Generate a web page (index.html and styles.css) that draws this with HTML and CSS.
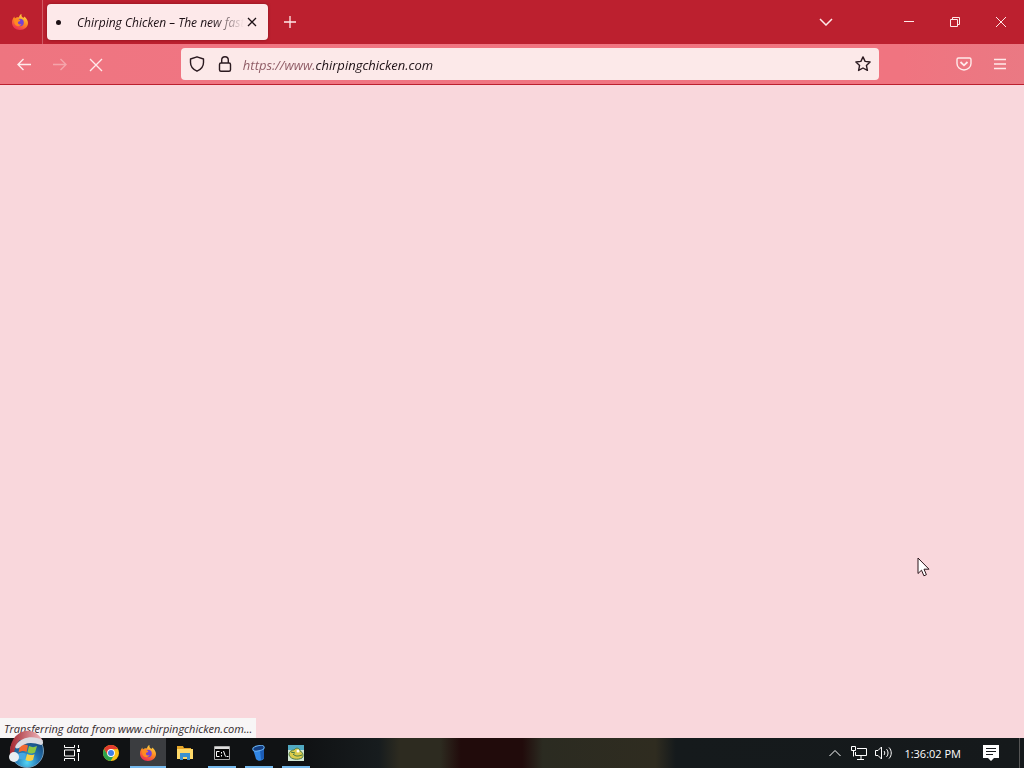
FILE: index.html
```html
<!DOCTYPE html>
<html lang="en">
<head>
  <meta charset="UTF-8" />
  <meta name="viewport" content="width=device-width, initial-scale=1" />
  <title>Chirping Chicken</title>
  <link rel="stylesheet" href="styles.css">
</head>
<body>
  <header class="titlebar">
    <button class="firefox-view" aria-label="Firefox View">
      <svg width="16" height="16" viewBox="0 0 32 32"><use href="#firefox"/></svg>
    </button>
    <div class="tab">
      <span class="tab-busy"></span>
      <span class="tab-title">Chirping Chicken – The new fast</span>
      <button class="tab-close" aria-label="Close tab">
        <svg width="10" height="10" viewBox="0 0 10 10"><path d="M1 1l8 8M9 1L1 9"/></svg>
      </button>
    </div>
    <button class="new-tab" aria-label="New tab">
      <svg width="12" height="12" viewBox="0 0 12 12"><path d="M6 0v12M0 6h12"/></svg>
    </button>
    <button class="all-tabs" aria-label="List all tabs">
      <svg width="14" height="8" viewBox="0 0 14 8"><path d="M1 1l6 6 6-6"/></svg>
    </button>
    <div class="window-controls">
      <button aria-label="Minimize">
        <svg width="10" height="10" viewBox="0 0 10 10"><path d="M0 4.5h10"/></svg>
      </button>
      <button aria-label="Restore">
        <svg width="10" height="10" viewBox="0 0 10 10"><path d="M.5 2.500h7v7h-7zM2.500 2.500v-2h7v7h-2"/></svg>
      </button>
      <button aria-label="Close">
        <svg width="10" height="10" viewBox="0 0 10 10"><path d="M0 0l10 10M10 0L0 10"/></svg>
      </button>
    </div>
  </header>

  <nav class="toolbar">
    <div class="tools">
      <button aria-label="Back">
        <svg width="16" height="16" viewBox="0 0 16 16"><path d="M15 8.500H2M7.500 3L2 8.500 7.500 14"/></svg>
      </button>
      <button aria-label="Forward" disabled>
        <svg width="16" height="16" viewBox="0 0 16 16"><path d="M1 8.500h13M8.500 3L14 8.500 8.500 14"/></svg>
      </button>
      <button aria-label="Stop">
        <svg width="16" height="16" viewBox="0 0 16 16"><path d="M2 3l12 12M14 3L2 15"/></svg>
      </button>
    </div>
    <div class="urlbar">
      <button aria-label="Tracking protection">
        <svg width="16" height="16" viewBox="0 0 16 16"><path d="M8 .8L14.500 3v3.500c0 3.600-2.500 7-6.500 8.700C4 13.500 1.500 10.100 1.500 6.500V3z"/></svg>
      </button>
      <button aria-label="Site information">
        <svg width="16" height="16" viewBox="0 0 16 16"><rect x="2.500" y="7" width="11" height="8.200" rx="1.500"/><path d="M4.700 7V4a3.300 3.300 0 0 1 6.600 0v3"/></svg>
      </button>
      <input class="url" type="text" aria-label="Address" value="https://www.chirpingchicken.com">
      <button aria-label="Bookmark this page">
        <svg width="16" height="16" viewBox="0 0 16 16"><path d="M8 .9l2.100 4.500 5 .6-3.700 3.400 1 5L8 12l-4.400 2.400 1-5L.9 6l5-.6z"/></svg>
      </button>
    </div>
    <div class="tools">
      <button aria-label="Save to Pocket">
        <svg width="16" height="16" viewBox="0 0 16 16"><path d="M2.500 2h11A1.500 1.500 0 0 1 15 3.500v4a7 6.500 0 0 1-14 0v-4A1.500 1.500 0 0 1 2.500 2z"/><path class="thick" d="M4.500 6L8 9.300 11.500 6"/></svg>
      </button>
      <button aria-label="Menu">
        <svg width="16" height="16" viewBox="0 0 16 16"><path d="M2 3.500h12M2 8h12M2 12.500h12"/></svg>
      </button>
    </div>
  </nav>

  <main class="page">
    <div class="status">Transferring data from www.chirpingchicken.com...</div>
    <svg class="cursor" width="13" height="21" viewBox="0 0 13 21"><path d="M1 1v15.500l3.500-3.300 2.400 5.600 2.500-1.100L7 12.200h5z"/></svg>
  </main>

  <footer class="taskbar">
    <button class="start" aria-label="Start">
      <svg width="46" height="38" viewBox="0 0 46 38">
        <defs>
          <radialGradient id="orb" cx=".5" cy=".85" r=".8">
            <stop offset="0" stop-color="#55d5f5"/>
            <stop offset=".45" stop-color="#2374b2"/>
            <stop offset="1" stop-color="#153c68"/>
          </radialGradient>
          <linearGradient id="hat" x1="0" x2="1">
            <stop offset="0" stop-color="#a42630"/>
            <stop offset="1" stop-color="#f0bcc0"/>
          </linearGradient>
        </defs>
        <circle cx="27" cy="21" r="16.500" fill="url(#orb)" stroke="#739bb8"/>
        <path d="M20 16c3-2 5-2 8-.5L26.500 22c-3-1.500-5-1-8 .5z" fill="#f16a32"/>
        <path d="M29 16c3 1.500 5 1.500 8 0L35 22.500c-3 1.500-5 1-7.500-.3z" fill="#8dc744"/>
        <path d="M18 24c3-1.500 5-1.500 8-.2L24.500 30c-3-1.500-5-1-8 .2z" fill="#46a7e4"/>
        <path d="M27 24c3 1.500 5 1.300 7.500.2L33 30c-3 1.500-5 1.200-7.500 0z" fill="#fbd044"/>
        <path d="M10 25C9 13 15 3 25 1c8-1 14 3 18 10L20 10c-4 4-6 9-6 16z" fill="url(#hat)"/>
        <path d="M16 15C21 7 34 5 42 10c2 2 1 5-1 5-9-3-16-3-22 3-3 1-5 0-3-3z" fill="#dcdce2"/>
        <circle cx="14" cy="27" r="5" fill="#e9edf2"/>
      </svg>
    </button>
    <div class="apps">
      <button aria-label="Task View">
        <svg class="line" width="18" height="16" viewBox="0 0 18 16"><path d="M1.500 0v2.500h10V0M1.500 16v-2.500h10V16M1.500 5h10v6h-10zM15.500 0v3M15.500 8v8"/><path d="M14 4h3v3h-3z" fill="#fff" stroke="none"/></svg>
      </button>
      <button aria-label="Google Chrome">
        <svg width="16" height="16" viewBox="0 0 16 16">
          <circle cx="8" cy="8" r="8" fill="#fbc116"/>
          <path d="M1.100 4A8 8 0 0 1 14.900 4L8 4.200 4.600 10z" fill="#e33b2e"/>
          <path d="M1.100 4a8 8 0 0 0 6.500 12l3.600-6L8 11.500 4.600 10z" fill="#2da44e"/>
          <circle cx="8" cy="8" r="3.900" fill="#fff"/>
          <circle cx="8" cy="8" r="3" fill="#3f7fe8"/>
        </svg>
      </button>
      <button class="open active" aria-label="Firefox">
        <svg width="16" height="16" viewBox="0 0 32 32">
          <defs>
            <linearGradient id="fire" x1=".8" y1="0" x2=".3" y2="1">
              <stop offset="0" stop-color="#ffe14a"/>
              <stop offset=".5" stop-color="#ff8a20"/>
              <stop offset="1" stop-color="#ee2758"/>
            </linearGradient>
          </defs>
          <g id="firefox">
            <path d="M19 0c-1 4 1 6 4 8 1-1 1-2 1-3 5 3 8 8 8 13 0 8-7 14-16 14S0 26 0 17C0 12 2 8 5 5c0 2 0 3 1 4 2-2 5-3 8-2 0-3 2-6 5-7z" fill="url(#fire)"/>
            <circle cx="16" cy="17" r="7.500" fill="#7542d5"/>
            <path d="M5 10c4-2 8-1 11 2 2 2-2 3-4 4-1 4 3 6 7 4-2 5-9 6-13 1-2-3-2-7-1-11z" fill="#ff8a22"/>
          </g>
        </svg>
      </button>
      <button aria-label="File Explorer">
        <svg width="16" height="14" viewBox="0 0 16 14">
          <path d="M0 0h6l1 2h7v3H0z" fill="#e5a62a"/>
          <path d="M0 3h16v10H0z" fill="#ffd969"/>
          <path d="M3 7h10v7h-3v-3H6v3H3z" fill="#3c91cf"/>
        </svg>
      </button>
      <button class="open" aria-label="Command Prompt">
        <svg width="16" height="14" viewBox="0 0 16 14">
          <path d="M.5.5h15v13H.5z" fill="#080808" stroke="#aaa"/>
          <path d="M1 1h14v2H1z" fill="#ddd"/>
          <path d="M5.500 5.500h-3v5h3M7.500 6v1.500M7.500 9v1.500M9.500 5l2 5.500M12.500 10.500h2" fill="none" stroke="#fff"/>
        </svg>
      </button>
      <button class="open" aria-label="Recycle bin">
        <svg width="16" height="16" viewBox="0 0 16 16">
          <path d="M2 4l3 10c2 3 7 2 8-1V2z" fill="#3187e6"/>
          <path d="M9 5l4-2v10l-3 2z" fill="#1c5cb5"/>
          <ellipse cx="7.500" cy="3.300" rx="5.800" ry="2.600" transform="rotate(-12 7.500 3.300)" fill="#143e82" stroke="#66b1f5"/>
        </svg>
      </button>
      <button class="open" aria-label="Game">
        <svg width="16" height="16" viewBox="0 0 16 16">
          <path d="M0 0h16v16H0z" fill="#d3e6d4"/>
          <path d="M0 0h16v5H0z" fill="#51a9c1"/>
          <path d="M1 10c0-4 3-5 5-5 2-3 6-2 6 1 3 1 4 5 2 7-4 2-11 2-13-3z" fill="#dccb4c" stroke="#4d7b47"/>
          <path d="M5 9c3 3 6 2 9 1M3 7l4 1" fill="none" stroke="#397344"/>
          <circle cx="10" cy="6" r="1.500" fill="#fff"/>
        </svg>
      </button>
    </div>
    <div class="tray">
      <button aria-label="Show hidden icons">
        <svg class="line" width="12" height="8" viewBox="0 0 12 8"><path d="M.5 7L6 1.500 11.500 7"/></svg>
      </button>
      <button aria-label="Network">
        <svg class="line" width="16" height="14" viewBox="0 0 16 14"><path d="M6 2.500h9.500v7h-11V6M.5.500h4v4h-4zM2.500 4.500v6M10 9.500v4M6 13.500h7"/></svg>
      </button>
      <button aria-label="Volume">
        <svg class="line" width="17" height="14" viewBox="0 0 17 14"><path d="M.5 4.500H3l3.500-3.500v12L3 9.500H.5zM9 5c1 1 1 3 0 4M11.500 3.200c2 2 2 5.600 0 7.600M14 1.500c3 3 3 8 0 11"/></svg>
      </button>
      <time class="clock">1:36:02 PM</time>
      <button class="notices" aria-label="Notifications">
        <svg width="16" height="16" viewBox="0 0 16 16"><path d="M0 0h16v13h-5l-3 3-3-3H0z" fill="#fff"/><path d="M3 3.500h10M3 6.500h10M3 9.500h7" stroke="#15191c"/></svg>
      </button>
      <button class="show-desktop" aria-label="Show desktop"></button>
    </div>
  </footer>
</body>
</html>
```

FILE: styles.css
```css
* {
  box-sizing: border-box;
}

body {
  margin: 0;
  min-height: 100vh;
  display: flex;
  flex-direction: column;
  font-family: "Open Sans", "Noto Sans", sans-serif;
  font-size: 12px;
  background-color: #f9d7dc;
}

button {
  display: flex;
  align-items: center;
  justify-content: center;
  flex-shrink: 0;
  padding: 0;
  border: none;
  background: none;
  color: inherit;
}

.titlebar svg,
.toolbar svg {
  fill: none;
  stroke: currentColor;
}

/* tab strip */
.titlebar {
  display: flex;
  align-items: center;
  height: 44px;
  background-color: #bc202f;
  color: #ffe9e9;
}

.firefox-view {
  width: 43px;
  height: 44px;
  padding-right: 2px;
  border-right: 1px solid #d05a65;
}

.titlebar .firefox-view svg {
  stroke: none;
}

.tab {
  display: flex;
  align-items: center;
  width: 221px;
  height: 36px;
  margin-left: 4px;
  padding: 0 8px;
  border-radius: 4px;
  background-color: #fde9ea;
  color: #1c1015;
  box-shadow: 0 0 3px rgba(80, 0, 10, 0.5);
}

.tab-busy {
  width: 5px;
  height: 5px;
  margin: 0 16px 0 1px;
  border-radius: 50%;
  background-color: #1c1015;
}

.tab-title {
  flex: 1;
  overflow: hidden;
  white-space: nowrap;
  font-style: italic;
  mask-image: linear-gradient(to left, transparent, #000 32px);
}

.tab-close {
  width: 16px;
  height: 24px;
}

.tab-close svg {
  stroke-width: 1.3;
}

.new-tab {
  width: 36px;
  height: 36px;
  margin-left: 4px;
}

.new-tab svg {
  stroke-width: 1.3;
}

.all-tabs {
  width: 36px;
  height: 36px;
  margin-left: auto;
}

.all-tabs svg {
  stroke-width: 1.5;
}

.window-controls {
  display: flex;
  margin-left: 42px;
}

.window-controls button {
  width: 46px;
  height: 44px;
}

/* navigation toolbar */
.toolbar {
  display: flex;
  align-items: center;
  justify-content: space-between;
  height: 41px;
  padding: 0 6px;
  background: linear-gradient(90deg, #ee7580, #f07582 20%, #f07480 88%, #ea7983);
  border-bottom: 1px solid #bc202f;
  color: #ffeaea;
}

.tools {
  display: flex;
}

.tools button {
  width: 36px;
  height: 32px;
}

.tools svg {
  stroke-width: 1.4;
}

.tools button:disabled {
  opacity: 0.4;
}

.tools .thick {
  stroke-width: 1.8;
}

.urlbar {
  display: flex;
  align-items: center;
  width: 69%;
  height: 32px;
  padding: 0 2px;
  border-radius: 4px;
  background-color: #fce9e9;
  color: #2b1a20;
}

.urlbar button {
  width: 28px;
  height: 28px;
}

.urlbar svg {
  stroke-width: 1.4;
  stroke-linejoin: round;
}

/* scheme and subdomain are dimmed, the domain is dark */
.url {
  flex: 1;
  min-width: 0;
  padding: 2px 0 0;
  margin-left: 4px;
  border: none;
  outline: none;
  font-family: inherit;
  font-size: 13px;
  font-style: italic;
  color: transparent;
  background: linear-gradient(90deg, #8c5862 73px, #1c1015 73px);
  background-clip: text;
  -webkit-background-clip: text;
}

/* page area */
.page {
  position: relative;
  flex: 1;
  display: flex;
  align-items: flex-end;
}

.status {
  height: 20px;
  padding: 2px 4px 0;
  line-height: 18px;
  font-size: 11px;
  font-style: italic;
  white-space: nowrap;
  background-color: #f8f6f6;
  color: #33292c;
}

.cursor {
  position: absolute;
  right: 94px;
  bottom: 160px;
  fill: #fff;
  stroke: #2b151b;
}

/* taskbar */
.taskbar {
  display: flex;
  align-items: center;
  height: 30px;
  color: #fff;
  background: linear-gradient(90deg, #101214 30%, #171c1e 37%, #2d2b20 39%, #2d2b20 43%, #210b0b 45%, #210b0b 51%, #2b2b21 53%, #2f2c20 64%, #151a1c 66%, #15191b);
}

.taskbar .line {
  fill: none;
  stroke: #fff;
}

.start {
  position: relative;
  width: 51px;
  height: 30px;
}

.start svg {
  position: absolute;
  left: 0;
  bottom: 0;
}

.apps {
  display: flex;
  gap: 1px;
}

.apps button {
  position: relative;
  width: 36px;
  height: 30px;
}

.apps button:first-child {
  width: 41px;
}

.open::after {
  content: "";
  position: absolute;
  left: 4px;
  right: 4px;
  bottom: 0;
  height: 2px;
  background-color: #76b9ed;
}

.active {
  background-color: #3b3d40;
}

.active::after {
  left: 0;
  right: 0;
}

.tray {
  display: flex;
  align-items: center;
  margin-left: auto;
}

.tray button {
  width: 24px;
  height: 30px;
}

.clock {
  margin: 0 2px 0 9px;
  font-size: 11px;
  white-space: nowrap;
}

.tray .notices {
  width: 56px;
}

.tray .show-desktop {
  width: 5px;
  border-left: 1px solid #555;
}
```
